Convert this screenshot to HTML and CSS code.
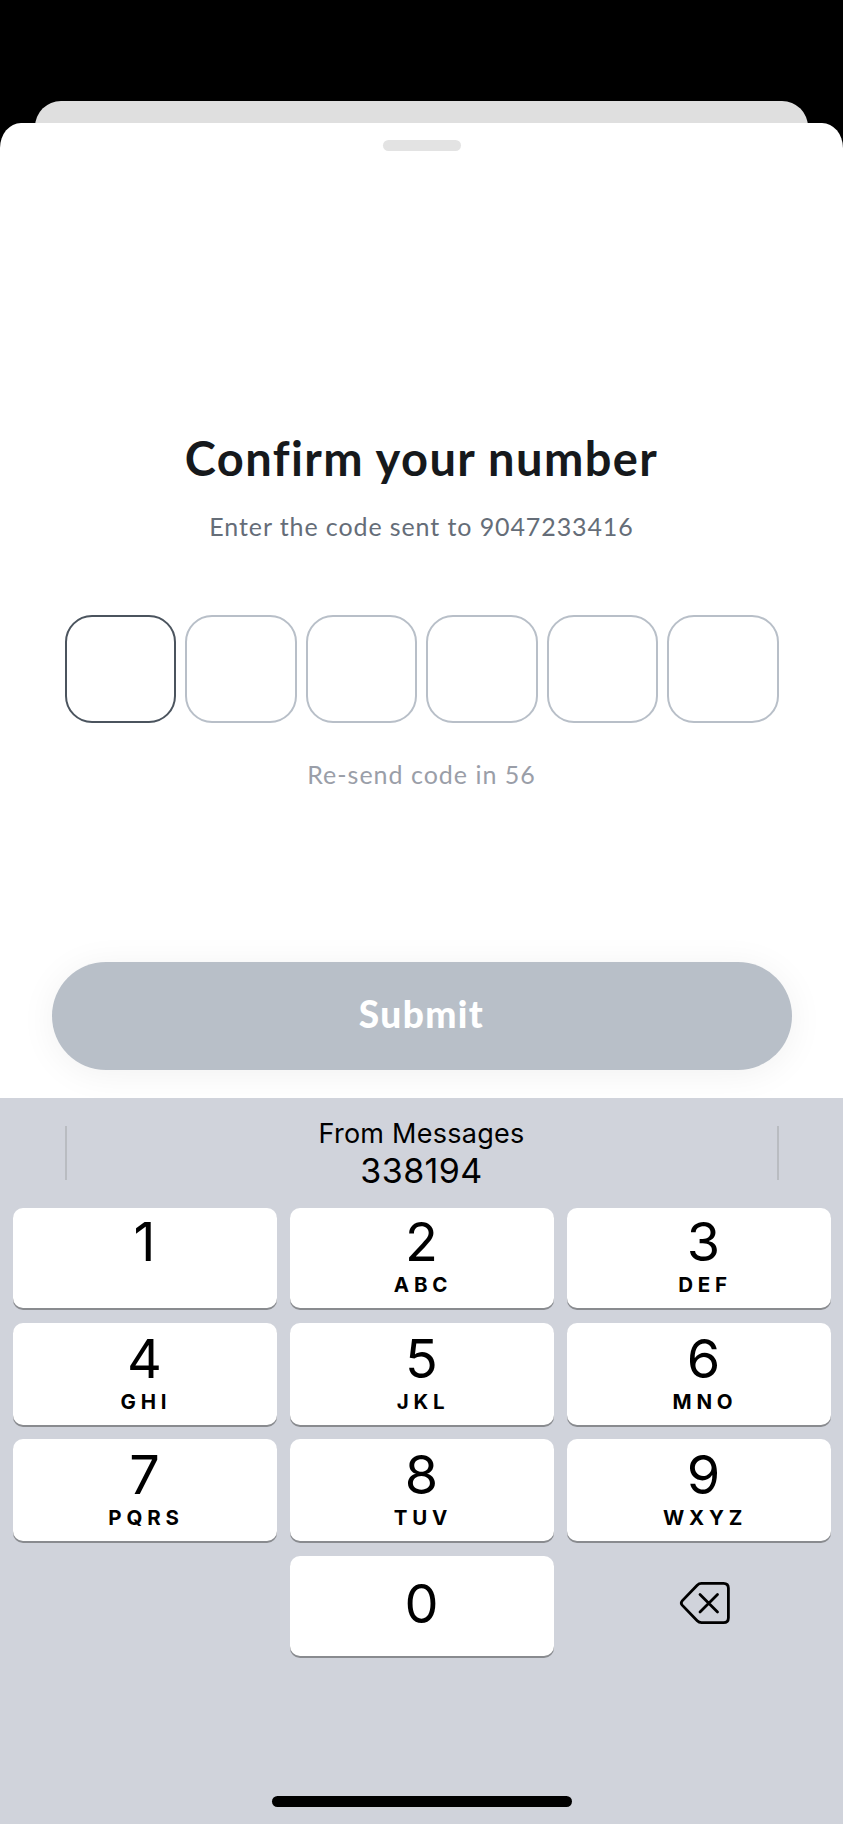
FILE: index.html
```html
<!DOCTYPE html>
<html lang="en">
<head>
<meta charset="utf-8">
<title>Confirm your number</title>
<link rel="stylesheet" href="styles.css">
</head>
<body>
<div class="screen">
  <div class="back-card"></div>
  <main class="sheet">
    <div class="handle"></div>
    <h1 class="title">Confirm your number</h1>
    <p class="subtitle">Enter the code sent to 9047233416</p>
    <div class="code">
      <div class="cell cell-active"></div>
      <div class="cell"></div>
      <div class="cell"></div>
      <div class="cell"></div>
      <div class="cell"></div>
      <div class="cell"></div>
    </div>
    <p class="resend">Re-send code in 56</p>
    <button class="submit" type="button">Submit</button>
  </main>
  <section class="keyboard">
    <div class="suggestions">
      <div class="divider"></div>
      <div class="suggestion">
        <div class="source">From Messages</div>
        <div class="otp">338194</div>
      </div>
      <div class="divider"></div>
    </div>
    <div class="keys">
      <div class="key key-top"><span class="digit">1</span></div>
      <div class="key key-top"><span class="digit">2</span><span class="letters">ABC</span></div>
      <div class="key key-top key-right"><span class="digit">3</span><span class="letters">DEF</span></div>
      <div class="key"><span class="digit">4</span><span class="letters">GHI</span></div>
      <div class="key"><span class="digit">5</span><span class="letters">JKL</span></div>
      <div class="key key-right"><span class="digit">6</span><span class="letters">MNO</span></div>
      <div class="key"><span class="digit">7</span><span class="letters">PQRS</span></div>
      <div class="key"><span class="digit">8</span><span class="letters">TUV</span></div>
      <div class="key key-right"><span class="digit">9</span><span class="letters">WXYZ</span></div>
      <div class="blank"></div>
      <div class="key key-zero"><span class="digit">0</span></div>
      <div class="delete">
        <svg class="delete-icon" width="52" height="44" viewBox="0 0 52 44" fill="none" stroke="#000" stroke-width="2.8" stroke-linecap="round" stroke-linejoin="round">
          <path d="M22.5 2.4H44.5Q49.4 2.4 49.4 7.3V36.7Q49.4 41.6 44.5 41.6H22.5Q20 41.6 18.2 39.8L3.4 24.4Q1.2 22 3.4 19.6L18.2 4.2Q20 2.4 22.5 2.4Z"/>
          <path d="M21 13.4L38.5 30.9M38.5 13.4L21 30.9"/>
        </svg>
      </div>
    </div>
    <div class="home-bar"></div>
  </section>
</div>
</body>
</html>
```
FILE: styles.css
```css
* {
  box-sizing: border-box;
}

body {
  margin: 0;
  background: #000;
}

.screen {
  display: flex;
  flex-direction: column;
  width: 843px;
  height: 1824px;
  padding-top: 101px;
  overflow: hidden;
  background: #000;
}

.back-card {
  flex: none;
  height: 42px;
  margin: 0 35px -20px;
  border-radius: 26px 26px 0 0;
  background: #dfdfdf;
}

.sheet {
  display: flex;
  flex: none;
  flex-direction: column;
  align-items: center;
  height: 975px;
  padding-top: 17px;
  border-radius: 21px 21px 0 0 / 25px 25px 0 0;
  background: #fff;
  font-family: Lato, "Open Sans", sans-serif;
}

.handle {
  width: 78px;
  height: 11px;
  border-radius: 6px;
  background: #e3e3e3;
}

.title {
  margin: 279px 0 0;
  color: #16191c;
  font-size: 47px;
  font-weight: 700;
  line-height: 56px;
  letter-spacing: 1.4px;
  white-space: nowrap;
}

.subtitle,
.resend {
  margin: 25px 0 0;
  color: #656d78;
  font-size: 25px;
  line-height: 30px;
  letter-spacing: 0.9px;
  white-space: nowrap;
}

.code {
  display: flex;
  gap: 9px;
  width: 714px;
  margin-top: 74px;
}

.cell {
  flex: 1;
  height: 108px;
  border: 2px solid #b8bfc8;
  border-radius: 27px;
}

.cell-active {
  border-color: #4b545e;
}

.resend {
  margin-top: 36px;
  color: #9a9ea8;
  letter-spacing: 1px;
}

.submit {
  width: 740px;
  height: 108px;
  margin-top: 172.5px;
  padding: 0 0 4px;
  border: 0;
  border-radius: 54px;
  background: #b8bfc8;
  box-shadow: 0 4px 36px rgba(0, 0, 0, 0.06);
  color: #fff;
  font-family: inherit;
  font-size: 37px;
  font-weight: 900;
  line-height: 44px;
  letter-spacing: 1.4px;
}

.keyboard {
  position: relative;
  display: flex;
  flex: 1;
  flex-direction: column;
  align-items: center;
  background: #d0d3db;
  color: #000;
  font-family: Inter, "Liberation Sans", sans-serif;
}

.suggestions {
  display: flex;
  justify-content: space-between;
  align-items: center;
  width: 714px;
  height: 110px;
}

.divider {
  width: 2px;
  height: 54px;
  background: #b9bcc1;
}

.suggestion {
  text-align: center;
}

.source {
  font-size: 27px;
  line-height: 34px;
  letter-spacing: 0.25px;
}

.otp {
  font-size: 34px;
  line-height: 39px;
  letter-spacing: 0.4px;
}

.keys {
  display: grid;
  grid-template-columns: repeat(3, 264px);
  grid-template-rows: 100px 102px 102px 100px;
  column-gap: 13px;
  row-gap: 14.5px;
}

.key {
  display: flex;
  flex-direction: column;
  align-items: center;
  padding-top: 6px;
  border-radius: 10px;
  background: #fff;
  box-shadow: 0 2px 0 #898b8f;
}

.key-top {
  padding-top: 4px;
}

.key-right {
  padding-left: 10px;
}

.key-zero {
  padding-top: 18px;
}

.digit {
  font-size: 54px;
  line-height: 60px;
}

.letters {
  padding-left: 3px;
  font-size: 20.5px;
  font-weight: 700;
  line-height: 26px;
  letter-spacing: 4.8px;
}

.delete {
  display: flex;
  align-items: center;
  justify-content: center;
  padding: 0 0 5px 12px;
}

.home-bar {
  width: 300px;
  height: 11px;
  margin-top: 140.5px;
  border-radius: 6px;
  background: #000;
}
```
